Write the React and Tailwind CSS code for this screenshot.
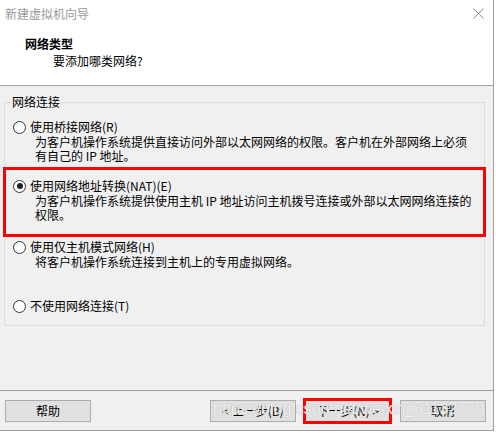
const options = [
  {
    label: "使用桥接网络",
    key: "R",
    desc: ["为客户机操作系统提供直接访问外部以太网网络的权限。客户机在外部网络上必须", "有自己的 IP 地址。"],
    gap: "mt-0",
  },
  {
    label: "使用网络地址转换(NAT)",
    key: "E",
    desc: ["为客户机操作系统提供使用主机 IP 地址访问主机拨号连接或外部以太网网络连接的", "权限。"],
    gap: "mt-[15px]",
    checked: true,
  },
  {
    label: "使用仅主机模式网络",
    key: "H",
    desc: ["将客户机操作系统连接到主机上的专用虚拟网络。"],
    gap: "mt-[17px]",
  },
  {
    label: "不使用网络连接",
    key: "T",
    desc: [],
    gap: "mt-[29px]",
  },
];

function Radio({ checked }) {
  return (
    <span className="w-[13px] h-[13px] rounded-full border border-[#333] bg-white flex items-center justify-center shrink-0">
      {checked && <span className="w-[6px] h-[6px] rounded-full bg-[#222]" />}
    </span>
  );
}

function Btn({ children }) {
  return (
    <button
      type="button"
      className="w-[86px] h-[22px] bg-[#e1e1e1] border border-[#adadad] text-[12px] leading-[20px] text-black"
    >
      {children}
    </button>
  );
}

export default function App() {
  return (
    <div className="relative w-[496px] h-[433px] bg-white overflow-hidden font-['Noto_Sans_CJK_SC','Noto_Sans',sans-serif] text-black">
      <div className="w-[494px] h-[431px] flex flex-col border-r border-b border-[#a0a0a0]">
        {/* Title bar */}
        <div className="h-[28px] flex items-center justify-between pl-[5px] pr-[9px]">
          <span className="text-[12px] leading-[16px] text-[#999]">新建虚拟机向导</span>
          <svg width="11" height="11" viewBox="0 0 11 11" className="mt-[-2px]">
            <path d="M0.5 0.5L10.5 10.5M10.5 0.5L0.5 10.5" stroke="#888" strokeWidth="1" fill="none" />
          </svg>
        </div>

        {/* Header */}
        <div className="h-[58px] bg-white border-b border-[#a0a0a0] pt-[8px]">
          <p className="pl-[25px] text-[12px] leading-[16px] font-bold">网络类型</p>
          <p className="pl-[53px] pt-[1px] text-[12px] leading-[16px]">要添加哪类网络?</p>
        </div>

        {/* Body */}
        <div className="flex-1 bg-[#f0f0f0] flex flex-col">
          <fieldset className="mt-[8px] ml-[4px] w-[481px] border border-[#dcdcdc] px-[6px] pt-[9px] pb-[11px]">
            <legend className="px-[1px] text-[12px] leading-[16px]">网络连接</legend>
            {options.map((o) => (
              <div key={o.key} className={o.gap}>
                <div className="h-[16px] flex items-center gap-[4px] pl-[2px]">
                  <Radio checked={o.checked} />
                  <span className="text-[12px] leading-[16px] whitespace-nowrap">
                    {o.label}({o.key})
                  </span>
                </div>
                {o.desc.map((line) => (
                  <p key={line} className="pl-[24px] text-[12px] leading-[14px] whitespace-nowrap">
                    {line}
                  </p>
                ))}
              </div>
            ))}
          </fieldset>

          <div className="mt-auto border-t border-[#a0a0a0]" />

          {/* Buttons */}
          <div className="flex items-center pl-[5px] pt-[9px] pb-[8px]">
            <Btn>帮助</Btn>
            <div className="ml-auto flex gap-[9px] pr-[7px]">
              <Btn>&lt; 上一步(B)</Btn>
              <Btn>下一步(N) &gt;</Btn>
              <Btn>取消</Btn>
            </div>
          </div>
        </div>
      </div>

      {/* Annotations */}
      <div className="absolute left-[3px] top-[167px] w-[483px] h-[70px] border-[3px] border-[#ff0000]" />
      <div className="absolute left-[303px] top-[398px] w-[89px] h-[26px] border-[3px] border-[#ff0000]" />

      {/* Watermark */}
      <span className="absolute left-[213px] top-[398px] text-[16px] leading-[22px] font-['Liberation_Sans',sans-serif] text-white/85 [text-shadow:0_0_1px_#999] whitespace-nowrap pointer-events-none">
        https://blog.csdn.net/weixin_51132770
      </span>
    </div>
  );
}
